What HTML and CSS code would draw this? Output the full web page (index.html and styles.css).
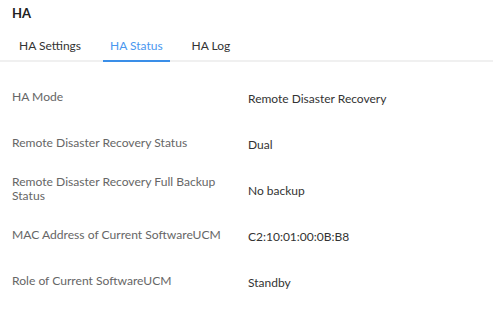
FILE: index.html
```html
<!DOCTYPE html>
<html lang="en">
<head>
  <meta charset="UTF-8">
  <title>HA</title>
  <link rel="stylesheet" href="styles.css">
</head>
<body>
<div class="page">
  <div class="page_title">HA</div>
  <div class="tabs">
    <div class="tab">HA Settings</div>
    <div class="tab active">HA Status</div>
    <div class="tab">HA Log</div>
  </div>
  <div class="status_list">
    <div class="row">
      <div class="row_label">HA Mode</div>
      <div class="row_value">Remote Disaster Recovery</div>
    </div>
    <div class="row">
      <div class="row_label">Remote Disaster Recovery Status</div>
      <div class="row_value">Dual</div>
    </div>
    <div class="row">
      <div class="row_label">Remote Disaster Recovery Full Backup Status</div>
      <div class="row_value">No backup</div>
    </div>
    <div class="row">
      <div class="row_label">MAC Address of Current SoftwareUCM</div>
      <div class="row_value">C2:10:01:00:0B:B8</div>
    </div>
    <div class="row">
      <div class="row_label">Role of Current SoftwareUCM</div>
      <div class="row_value">Standby</div>
    </div>
  </div>
</div>
</body>
</html>
```
FILE: styles.css
```css
*{
  margin: 0;
  padding: 0;
  box-sizing: border-box;
}
body{
  background: #fff;
  font-family: Lato, "Open Sans", sans-serif;
  font-size: 12px;
  color: #333;
}
.page_title{
  font-size: 13px;
  font-weight: bold;
  color: #222;
  padding: 5px 12px 0;
  height: 32px;
}
.tabs{
  display: flex;
  gap: 15px;
  padding-left: 12px;
  border-bottom: 2px solid #f0f0f0;
}
.tab{
  padding: 0 7px;
  height: 30px;
  line-height: 28px;
  color: #333;
  border-bottom: 2px solid transparent;
  margin-bottom: -2px;
}
.tab.active{
  color: #4a97ef;
  border-bottom-color: #3a8ee8;
}
.status_list{
  padding: 12px 0 0 12px;
}
.row{
  display: grid;
  grid-template-columns: 236px 1fr;
  align-items: center;
  height: 46px;
}
.row_label{
  color: #666;
  padding-right: 12px;
  line-height: 14px;
  font-size: 12.1px;
}
.row_value{
  color: #333;
  padding-top: 2px;
}
```
